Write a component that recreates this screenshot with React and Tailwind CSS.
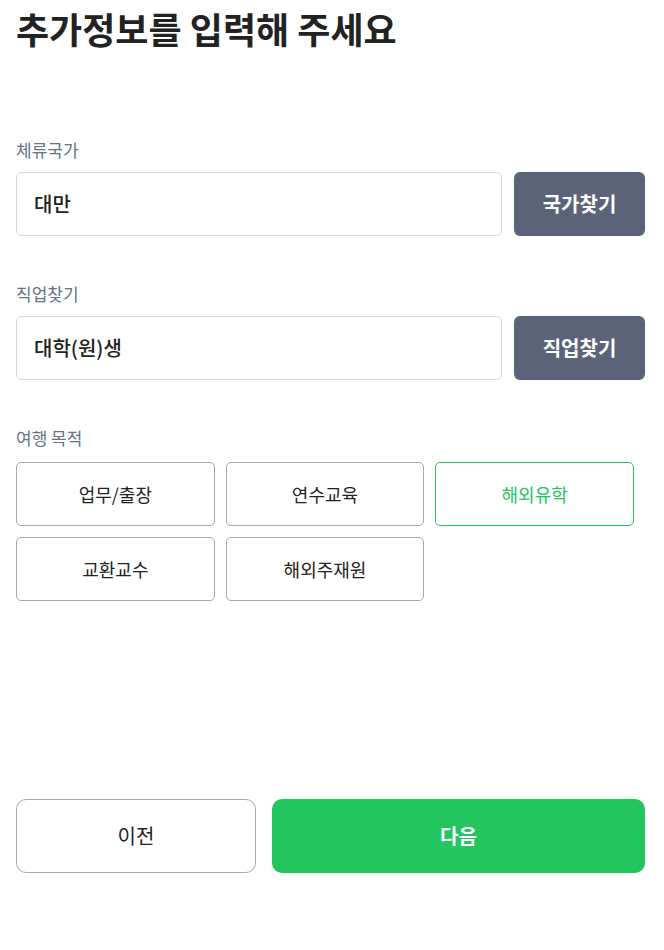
const PURPOSES = ['업무/출장', '연수교육', '해외유학', '교환교수', '해외주재원'];

function SearchField({ label, value, action }) {
  return (
    <div>
      <p className="text-[17px] leading-6 text-[#687185]">{label}</p>
      <div className="mt-[10px] flex gap-3">
        <div className="flex h-16 flex-1 items-center rounded-[5px] border border-[#d9dbe1] px-[17px]">
          <span className="text-[20px] font-medium text-[#222]">{value}</span>
        </div>
        <button className="h-16 w-[131px] rounded-[6px] bg-[#5a6377] text-[20px] font-bold text-white">
          {action}
        </button>
      </div>
    </div>
  );
}

export default function App() {
  const selected = '해외유학';

  return (
    <div
      className="min-h-[950px] w-[664px] bg-white pl-4 pr-[19px]"
      style={{ fontFamily: '"Noto Sans CJK KR", "Noto Sans", sans-serif' }}
    >
      <h1 className="pt-[4px] text-[36px] font-bold leading-[48px] text-[#222]">
        추가정보를 입력해 주세요
      </h1>

      <div className="mt-[86px]">
        <SearchField label="체류국가" value="대만" action="국가찾기" />
      </div>
      <div className="mt-[46px]">
        <SearchField label="직업찾기" value="대학(원)생" action="직업찾기" />
      </div>

      <div className="mt-[46px]">
        <p className="text-[17px] leading-6 text-[#687185]">여행 목적</p>
        <div className="mt-3 grid w-[618px] grid-cols-3 gap-[11px]">
          {PURPOSES.map((p) => (
            <button
              key={p}
              className={`h-16 rounded-[5px] border bg-white text-[18px] ${
                p === selected ? 'border-[#22c55e] text-[#22c55e]' : 'border-[#a3a9b5] text-[#222]'
              }`}
            >
              {p}
            </button>
          ))}
        </div>
      </div>

      <div className="mt-[198px] flex gap-4">
        <button className="h-[74px] w-[240px] rounded-[10px] border border-[#a3a9b5] bg-white text-[20px] text-[#222]">
          이전
        </button>
        <button className="h-[74px] flex-1 rounded-[10px] bg-[#22c55e] text-[20px] font-bold text-white">
          다음
        </button>
      </div>
    </div>
  );
}
